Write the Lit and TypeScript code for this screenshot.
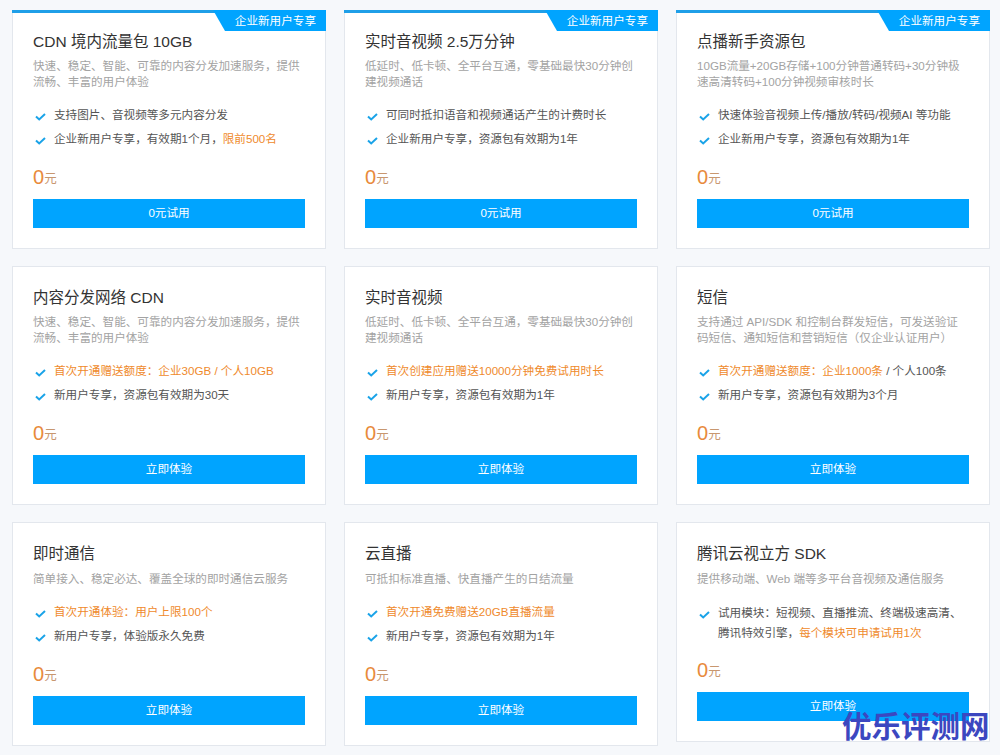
import { LitElement, html, css, nothing } from "lit";
import { customElement } from "lit/decorators.js";

type Seg = string | { o: string };
interface Card {
  title: string;
  desc: string;
  items: Seg[][];
  btn: string;
  tag?: boolean;
  single?: boolean;
  tight?: boolean;
}

const CDN_DESC = "快速、稳定、智能、可靠的内容分发加速服务，提供流畅、丰富的用户体验";
const TRTC_DESC = "低延时、低卡顿、全平台互通，零基础最快30分钟创建视频通话";

const cards: Card[] = [
  { title: "CDN 境内流量包 10GB", desc: CDN_DESC, tag: true, btn: "0元试用",
    items: [["支持图片、音视频等多元内容分发"], ["企业新用户专享，有效期1个月，", { o: "限前500名" }]] },
  { title: "实时音视频 2.5万分钟", desc: TRTC_DESC, tag: true, btn: "0元试用",
    items: [["可同时抵扣语音和视频通话产生的计费时长"], ["企业新用户专享，资源包有效期为1年"]] },
  { title: "点播新手资源包", desc: "10GB流量+20GB存储+100分钟普通转码+30分钟极速高清转码+100分钟视频审核时长", tag: true, btn: "0元试用",
    items: [["快速体验音视频上传/播放/转码/视频AI 等功能"], ["企业新用户专享，资源包有效期为1年"]] },
  { title: "内容分发网络 CDN", desc: CDN_DESC, btn: "立即体验",
    items: [[{ o: "首次开通赠送额度：企业30GB / 个人10GB" }], ["新用户专享，资源包有效期为30天"]] },
  { title: "实时音视频", desc: TRTC_DESC, btn: "立即体验",
    items: [[{ o: "首次创建应用赠送10000分钟免费试用时长" }], ["新用户专享，资源包有效期为1年"]] },
  { title: "短信", desc: "支持通过 API/SDK 和控制台群发短信，可发送验证码短信、通知短信和营销短信（仅企业认证用户）", btn: "立即体验",
    items: [[{ o: "首次开通赠送额度：企业1000条" }, " / 个人100条"], ["新用户专享，资源包有效期为3个月"]] },
  { title: "即时通信", desc: "简单接入、稳定必达、覆盖全球的即时通信云服务", btn: "立即体验", single: true,
    items: [[{ o: "首次开通体验：用户上限100个" }], ["新用户专享，体验版永久免费"]] },
  { title: "云直播", desc: "可抵扣标准直播、快直播产生的日结流量", btn: "立即体验", single: true,
    items: [[{ o: "首次开通免费赠送20GB直播流量" }], ["新用户专享，资源包有效期为1年"]] },
  { title: "腾讯云视立方 SDK", desc: "提供移动端、Web 端等多平台音视频及通信服务", btn: "立即体验", single: true, tight: true,
    items: [["试用模块：短视频、直播推流、终端极速高清、腾讯特效引擎，", { o: "每个模块可申请试用1次" }]] },
];

@customElement("app-root")
export class AppRoot extends LitElement {
  static styles = css`
    :host {
      display: block;
      position: relative;
      height: 755px;
      overflow: hidden;
      background: #f6f8fb;
      font-family: "Liberation Sans", "Noto Sans CJK SC", sans-serif;
    }
    .grid {
      display: grid;
      grid-template-columns: repeat(3, 314px);
      column-gap: 18px;
      row-gap: 17px;
      padding: 10px 0 0 12px;
      align-items: start;
    }
    .card {
      position: relative;
      box-sizing: border-box;
      background: #fff;
      border: 1px solid #e3e7ed;
      padding: 19px 20px 20px;
    }
    .card.tagged::before {
      content: "";
      position: absolute;
      left: -1px;
      right: -1px;
      top: -1px;
      height: 3px;
      background: #1f9fe8;
    }
    .tag {
      position: absolute;
      right: -1px;
      top: -1px;
      width: 113px;
      height: 21px;
      box-sizing: border-box;
      padding: 1px 10px 0 0;
      background: #00a4ff;
      color: #fff;
      font-size: 11.6px;
      line-height: 20px;
      text-align: right;
      clip-path: polygon(0 0, 100% 0, 100% 100%, 12px 100%);
    }
    .title {
      margin: 0;
      font-weight: 400;
      line-height: 24px;
      color: #333;
      font-size: 15.5px;
    }
    .desc {
      margin: 4px 0 0;
      font-size: 11.6px;
      line-height: 16px;
      color: #a3a3a3;
    }
    .single .desc {
      margin-top: 5px;
    }
    ul {
      list-style: none;
      margin: 13px 0 0;
      padding: 0;
    }
    li {
      display: flex;
      font-size: 11.6px;
      line-height: 24px;
      color: #555;
    }
    .tight li {
      line-height: 20px;
    }
    .tight ul {
      margin-top: 16px;
    }
    li svg {
      flex: none;
      width: 11px;
      height: 8px;
      margin: 10px 8px 0 2px;
    }
    .tight li svg {
      margin-top: 8px;
    }
    .o {
      color: #ef8a2c;
    }
    .price {
      margin-top: 14px;
      height: 24px;
      line-height: 24px;
      color: #c8976f;
    }
    .price b {
      font-weight: 400;
      font-size: 20px;
      color: #e88a3c;
    }
    .unit {
      font-size: 12.5px;
      vertical-align: 1px;
    }
    .tight .price {
      margin-top: 15px;
    }
    .btn {
      margin-top: 10px;
      height: 29px;
      line-height: 28px;
      background: #00a4ff;
      color: #fff;
      font-size: 11.6px;
      text-align: center;
    }
    .mark {
      position: absolute;
      left: 842px;
      top: 708px;
      font-size: 29.5px;
      line-height: 38px;
      font-weight: 700;
      color: #3c47c0;
      white-space: nowrap;
    }
  `;

  private seg(s: Seg) {
    return typeof s === "string" ? s : html`<span class="o">${s.o}</span>`;
  }

  render() {
    return html`
      <div class="grid">
        ${cards.map(
          (c) => html`
            <div class="card ${c.tag ? "tagged" : ""} ${c.single ? "single" : ""} ${c.tight ? "tight" : ""}">
              ${c.tag ? html`<div class="tag">企业新用户专享</div>` : nothing}
              <h3 class="title">${c.title}</h3>
              <p class="desc">${c.desc}</p>
              <ul>
                ${c.items.map(
                  (it) => html`<li>
                    <svg viewBox="0 0 11 8"><path d="M1 3.4 4.2 6.4 10 1" fill="none" stroke="#1aa3e8" stroke-width="2"/></svg>
                    <span>${it.map((s) => this.seg(s))}</span>
                  </li>`
                )}
              </ul>
              <div class="price"><b>0</b><span class="unit">元</span></div>
              <div class="btn">${c.btn}</div>
            </div>
          `
        )}
      </div>
      <div class="mark">优乐评测网</div>
    `;
  }
}
